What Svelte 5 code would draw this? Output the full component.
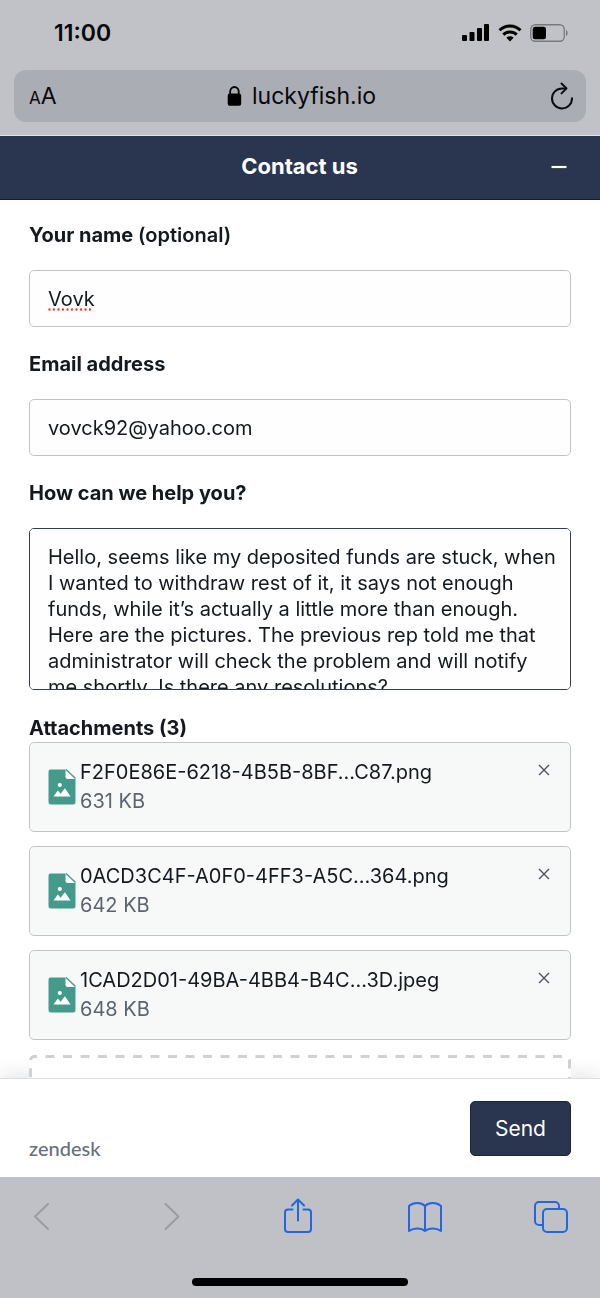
<script lang="ts">
	interface Attachment {
		name: string;
		size: string;
	}

	let name = $state('Vovk');
	let email = $state('vovck92@yahoo.com');
	let message = $state(
		'Hello, seems like my deposited funds are stuck, when I wanted to withdraw rest of it, it says not enough funds, while it’s actually a little more than enough. Here are the pictures. The previous rep told me that administrator will check the problem and will notify me shortly. Is there any resolutions?'
	);
	let attachments = $state<Attachment[]>([
		{ name: 'F2F0E86E-6218-4B5B-8BF...C87.png', size: '631 KB' },
		{ name: '0ACD3C4F-A0F0-4FF3-A5C...364.png', size: '642 KB' },
		{ name: '1CAD2D01-49BA-4BB4-B4C...3D.jpeg', size: '648 KB' }
	]);

	function removeAttachment(index: number) {
		attachments = attachments.filter((_, i) => i !== index);
	}
</script>

<div class="screen">
	<div class="browser-top">
		<div class="status">
			<span class="time">11:00</span>
			<div class="indicators">
				<svg width="28" height="18" viewBox="0 0 28 18" aria-hidden="true">
					<rect x="0" y="11" width="5" height="6" rx="1" />
					<rect x="7.5" y="8" width="5" height="9" rx="1" />
					<rect x="15" y="4" width="5" height="13" rx="1" />
					<rect x="22" y="0" width="5" height="17" rx="1" />
				</svg>
				<svg width="24" height="18" viewBox="0 0 24 18" aria-hidden="true">
					<g fill="none" stroke="#000" stroke-width="3">
						<path d="M1.5 6.3a15 15 0 0 1 21 0" />
						<path d="M5.3 10.6a9.6 9.6 0 0 1 13.4 0" />
					</g>
					<path d="M12 17.4l-3.6-3.6a5.2 5.2 0 0 1 7.2 0z" />
				</svg>
				<svg width="38" height="18" viewBox="0 0 38 18" aria-hidden="true">
					<rect x="0.75" y="0.75" width="33.5" height="16.5" rx="4.5" fill="none" stroke="#77787c" stroke-width="1.3" />
					<rect x="2.7" y="2.7" width="13.3" height="12.6" rx="2.5" />
					<path d="M36 6c2.2.8 2.2 5.2 0 6z" fill="#77787c" />
				</svg>
			</div>
		</div>
		<div class="address-bar">
			<button class="plain text-size" type="button"><span>A</span>A</button>
			<div class="host">
				<svg width="15" height="20" viewBox="0 0 15 20" aria-hidden="true">
					<rect x="0.7" y="7.5" width="13.5" height="12.300" rx="2" />
					<path d="M3.200 9V5.500a4.250 4.500 0 0 1 8.500 0V9" fill="none" stroke="#000" stroke-width="1.8" />
				</svg>
				<span>luckyfish.io</span>
			</div>
			<button class="plain" type="button" aria-label="Reload">
				<svg width="24" height="28" viewBox="0 0 24 28" fill="none" stroke="#0b0c10" stroke-width="2" stroke-linecap="round" stroke-linejoin="round">
					<path d="M16 6.400H12a10 10 0 1 0 10 9.800" />
					<path d="M11.500 1.500l5 4.900-5 5" />
				</svg>
			</button>
		</div>
	</div>

	<header class="widget-header">
		<h1>Contact us</h1>
		<button class="plain minimize" type="button" aria-label="Minimize">
			<svg width="16" height="16" viewBox="0 0 16 16"><path d="M0.5 9h15" stroke="#fff" stroke-width="2.2" /></svg>
		</button>
	</header>

	<main>
		<form id="contact" onsubmit={(e) => e.preventDefault()}>
			<label for="name">Your name <span>(optional)</span></label>
			<div class="spellchecked">
				<input id="name" type="text" spellcheck="false" bind:value={name} />
				<svg class="misspelling" style="width: {name.length * 11}px" height="3" aria-hidden="true">
					<path d="M1.500 1.500H600" />
				</svg>
			</div>

			<label for="email">Email address</label>
			<input id="email" type="email" bind:value={email} />

			<label for="message">How can we help you?</label>
			<textarea id="message" spellcheck="false" bind:value={message}></textarea>

			<h2>Attachments ({attachments.length})</h2>
			<ul>
				{#each attachments as file, i (file.name)}
					<li>
						<svg class="file-icon" width="28" height="36" viewBox="0 0 28 36" aria-hidden="true">
							<path d="M2.5 0.5H17.5V8q0 2 2 2H27.5V33a2.5 2.5 0 0 1-2.5 2.5H3A2.5 2.5 0 0 1 0.5 33V2.5a2 2 0 0 1 2-2z" fill="#449b8b" />
							<path d="M18.5 1.5l8 7.5h-6a2 2 0 0 1-2-2z" fill="#fff" />
							<path d="M18 0.5l9.5 9" stroke="#449b8b" stroke-width="1.4" />
							<circle cx="11.8" cy="16" r="2.1" fill="#fff" />
							<path d="M5.5 27.5l4.3-6 2.8 3.2 4.3-5.5 5.6 8.3z" fill="#fff" />
						</svg>
						<div class="file-text">
							<span class="file-name">{file.name}</span>
							<span class="file-size">{file.size}</span>
						</div>
						<button class="plain remove" type="button" aria-label="Remove {file.name}" onclick={() => removeAttachment(i)}>
							<svg width="12" height="12" viewBox="0 0 12 12"><path d="M1 1l10 10M11 1L1 11" stroke="#4b535c" stroke-width="1.4" /></svg>
						</button>
					</li>
				{/each}
			</ul>
			<button class="plain dropzone" type="button" aria-label="Add file">
				<svg width="100%" height="100%">
					<rect class="dashes" x="1.5" y="1.5" rx="4" />
				</svg>
			</button>
		</form>
	</main>

	<footer>
		<a class="brand" href="#zendesk">zendesk</a>
		<button class="send" type="submit" form="contact">Send</button>
	</footer>

	<div class="browser-bottom">
		<nav>
			<button class="plain" type="button" aria-label="Back" disabled>
				<svg width="34" height="36" viewBox="0 0 34 36"><path d="M20 6L7 18.500 20 31" stroke="#9a9ca2" /></svg>
			</button>
			<button class="plain" type="button" aria-label="Forward" disabled>
				<svg width="34" height="36" viewBox="0 0 34 36"><path d="M10.500 6l13 12.500L10.500 31" stroke="#9a9ca2" /></svg>
			</button>
			<button class="plain" type="button" aria-label="Share">
				<svg width="34" height="36" viewBox="0 0 34 36">
					<path d="M11.500 11.500H7a3 3 0 0 0-3 3V31a3 3 0 0 0 3 3h20a3 3 0 0 0 3-3V14.500a3 3 0 0 0-3-3h-4.500" />
					<path d="M17 22.500V1.800M11 7.500l6-6 6 6" />
				</svg>
			</button>
			<button class="plain" type="button" aria-label="Bookmarks">
				<svg width="34" height="36" viewBox="0 0 34 36">
					<path d="M17 8C13 4 5.500 4 1 8V33c4.500-3.500 12-3.500 16 0 4-3.500 11.500-3.500 16 0V8c-4.500-4-12-4-16 0zV33" />
				</svg>
			</button>
			<button class="plain" type="button" aria-label="Tabs">
				<svg width="34" height="36" viewBox="0 0 34 36">
					<path d="M9 27H5a4 4 0 0 1-4-4V8a4 4 0 0 1 4-4h16a4 4 0 0 1 4 4v3" />
					<rect x="9" y="11" width="24" height="23" rx="4" />
				</svg>
			</button>
		</nav>
		<div class="home-indicator"></div>
	</div>
</div>

<style>
	:global(body) {
		margin: 0;
	}

	.screen {
		display: flex;
		flex-direction: column;
		height: 100vh;
		background: #fff;
		color: #14191f;
		font-family: Inter, 'Liberation Sans', sans-serif;
		font-size: 20px;
	}

	.plain {
		display: flex;
		align-items: center;
		padding: 0;
		border: 0;
		background: none;
		color: inherit;
		font: inherit;
	}

	svg {
		display: block;
	}

	.browser-top {
		padding: 0 14px 13px;
		border-bottom: 1px solid #e4e5e9;
		background: #c1c2c7;
		color: #07080b;
	}
	.status {
		display: flex;
		align-items: center;
		justify-content: space-between;
		height: 66px;
		padding: 0 18px 4px 40px;
	}
	.time {
		font-size: 23px;
		font-weight: 600;
	}
	.indicators {
		display: flex;
		gap: 8px;
	}
	.address-bar {
		display: grid;
		grid-template-columns: 1fr auto 1fr;
		align-items: center;
		height: 52px;
		padding: 0 12px 0 15px;
		border-radius: 12px;
		background: #abadb5;
	}
	.address-bar > :last-child {
		justify-self: end;
	}
	.text-size {
		align-items: baseline;
		font-size: 23px;
	}
	.text-size span {
		font-size: 17px;
	}
	.host {
		display: flex;
		align-items: center;
		gap: 10px;
		font-size: 23px;
	}

	.widget-header {
		display: grid;
		grid-template-columns: 1fr auto 1fr;
		align-items: center;
		box-sizing: border-box;
		height: 64px;
		padding: 0 33px 3px 32px;
		border-bottom: 1px solid #111c3a;
		background: #2a3550;
		color: #fff;
	}
	h1 {
		grid-column: 2;
		margin: 0;
		font-size: 22px;
		font-weight: 700;
	}
	.minimize {
		justify-self: end;
	}

	main {
		flex: 1;
		min-height: 0;
		padding: 21px 29px 0;
		overflow-y: auto;
		scrollbar-width: none;
	}
	label,
	h2 {
		display: block;
		margin: 23px 0 21px;
		font-size: 20px;
		font-weight: 700;
		line-height: 28px;
	}
	label:first-child {
		margin-top: 0;
	}
	label span {
		font-weight: 600;
	}
	h2 {
		margin: 24px 0 0;
	}
	input,
	textarea {
		display: block;
		box-sizing: border-box;
		width: 100%;
		border: 1px solid #c0c4c9;
		border-radius: 5px;
		outline: none;
		background: #fefefe;
		color: inherit;
		font: inherit;
	}
	input {
		height: 57px;
		padding: 0 18px;
	}
	.spellchecked {
		position: relative;
	}
	.misspelling {
		position: absolute;
		bottom: 16px;
		left: 19px;
		fill: none;
		stroke: #e0413a;
		stroke-width: 2.4;
		stroke-linecap: round;
		stroke-dasharray: 0 4.5;
	}
	textarea {
		height: 162px;
		padding: 15px 8px 0 18px;
		border-color: #343d4e;
		line-height: 26px;
		resize: none;
		scrollbar-width: none;
	}

	ul {
		display: grid;
		gap: 14px;
		margin: 0 0 15px;
		padding: 0;
		list-style: none;
	}
	li {
		display: flex;
		align-items: center;
		box-sizing: border-box;
		height: 90px;
		padding: 0 20px 0 18px;
		border: 1px solid #c0c4c9;
		border-radius: 5px;
		background: #f7f9f9;
	}
	.file-text {
		display: flex;
		flex: 1;
		flex-direction: column;
		padding-left: 4px;
		line-height: 29px;
	}
	.file-size {
		color: #5c6470;
	}
	.remove {
		align-self: start;
		padding-top: 21px;
	}
	.dropzone {
		position: relative;
		width: 100%;
		height: 71px;
		background: #fff;
	}
	.dashes {
		width: calc(100% - 3px);
		height: 68px;
		fill: none;
		stroke: #cfd2d5;
		stroke-width: 3;
		stroke-dasharray: 9 8.5;
		stroke-dashoffset: -11;
	}

	footer {
		display: flex;
		align-items: center;
		justify-content: space-between;
		height: 98px;
		padding: 0 29px;
		border-top: 1px solid #dcdfe1;
		background: #fff;
		box-shadow: 0 -4px 18px rgb(0 0 0 / 10%);
	}
	.brand {
		padding-top: 40px;
		color: #686f79;
		font-family: Lato, sans-serif;
		font-size: 20px;
		font-weight: 500;
		text-decoration: none;
	}
	.send {
		width: 101px;
		height: 55px;
		padding: 0;
		border: 1px solid #1b2540;
		border-radius: 5px;
		background: #2a3550;
		color: #fff;
		font: inherit;
		font-size: 21px;
	}

	.browser-bottom {
		display: flex;
		flex-direction: column;
		justify-content: space-between;
		height: 121px;
		background: #bfc1c7;
	}
	nav {
		display: flex;
		justify-content: space-between;
		padding: 21px 32px 0 28px;
	}
	nav svg {
		fill: none;
		stroke: #2367df;
		stroke-width: 2;
		stroke-linecap: round;
		stroke-linejoin: round;
	}
	.home-indicator {
		align-self: center;
		width: 36%;
		height: 8px;
		margin-bottom: 12px;
		border-radius: 4px;
		background: #000;
	}
</style>
